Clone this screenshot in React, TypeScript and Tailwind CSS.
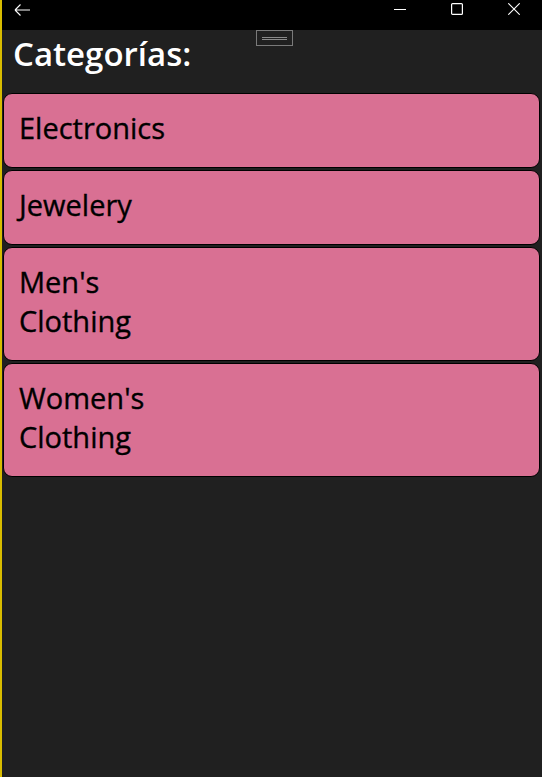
const categories = ["Electronics", "Jewelery", "Men's Clothing", "Women's Clothing"];

export default function App() {
  return (
    <div
      className="flex h-[777px] w-[542px] overflow-hidden border-l-2 border-[#d8bc00] bg-[#202020]"
      style={{ fontFamily: '"Open Sans", "Noto Sans", sans-serif' }}
    >
      <div className="flex flex-1 flex-col">
        {/* title bar */}
        <div className="relative flex h-[30px] items-start bg-black pt-[3px] text-white">
          <svg className="ml-[12px] mt-[1px] h-[12px] w-[16px]" viewBox="0 0 16 12" fill="none" stroke="currentColor" strokeWidth="1.1">
            <path d="M1 6H16M1 6L6.5 0.5M1 6L6.5 11.5" />
          </svg>
          <div className="ml-auto flex items-start">
            <div className="flex w-[57px] justify-center">
              <svg className="h-[12px] w-[12px]" viewBox="0 0 12 12" stroke="currentColor" strokeWidth="1">
                <path d="M0 6.5H12" />
              </svg>
            </div>
            <div className="flex w-[57px] justify-center">
              <svg className="h-[12px] w-[12px]" viewBox="0 0 12 12" fill="none" stroke="currentColor" strokeWidth="1.2">
                <rect x="0.6" y="0.6" width="10.8" height="10.8" rx="1" />
              </svg>
            </div>
            <div className="flex w-[57px] justify-center">
              <svg className="h-[12px] w-[12px]" viewBox="0 0 12 12" stroke="currentColor" strokeWidth="1.1">
                <path d="M0.3 0.3L11.7 11.7M11.7 0.3L0.3 11.7" />
              </svg>
            </div>
          </div>
          <div className="absolute left-[254px] top-[30px] flex h-[16px] w-[37px] items-center justify-center border border-[#7a7a7a]">
            <div className="h-[3px] w-[25px] border-y border-[#8a8a8a]" />
          </div>
        </div>

        <h1 className="ml-[11px] text-[33px] font-semibold leading-[48px] text-white">
          Categorías:
        </h1>

        <div className="mt-[15px] flex flex-col gap-[2px] pl-[1px] pr-[2px]">
          {categories.map((c) => (
            <div
              key={c}
              className="rounded-[9px] border border-black bg-[#d97093] px-[15px] pb-[20px] pt-[14px]"
            >
              <p className="w-[150px] text-[29px] leading-[39px] text-black [-webkit-text-stroke:0.35px_black]">
                {c}
              </p>
            </div>
          ))}
        </div>
      </div>
    </div>
  );
}
